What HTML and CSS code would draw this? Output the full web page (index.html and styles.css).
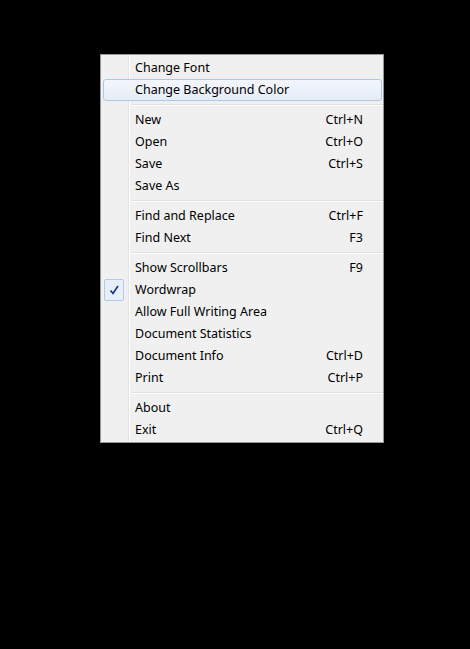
FILE: index.html
```html
<!DOCTYPE html>
<html>
<head>
<meta charset="utf-8">
<link rel="stylesheet" href="styles.css">
</head>
<body>
<div class="menu">
  <div class="item"><span class="label">Change Font</span></div>
  <div class="item hover"><span class="label">Change Background Color</span></div>
  <div class="sep"></div>
  <div class="item"><span class="label">New</span><span class="key">Ctrl+N</span></div>
  <div class="item"><span class="label">Open</span><span class="key">Ctrl+O</span></div>
  <div class="item"><span class="label">Save</span><span class="key">Ctrl+S</span></div>
  <div class="item"><span class="label">Save As</span></div>
  <div class="sep"></div>
  <div class="item"><span class="label">Find and Replace</span><span class="key">Ctrl+F</span></div>
  <div class="item"><span class="label">Find Next</span><span class="key">F3</span></div>
  <div class="sep"></div>
  <div class="item"><span class="label">Show Scrollbars</span><span class="key">F9</span></div>
  <div class="item checked">
    <span class="check"><svg width="12" height="12" viewBox="0 0 12 12"><path d="M2.5 6.5 L5 9.5 L10 2" fill="none" stroke="#14308a" stroke-width="1.6" stroke-linejoin="miter"/></svg></span>
    <span class="label">Wordwrap</span>
  </div>
  <div class="item"><span class="label">Allow Full Writing Area</span></div>
  <div class="item"><span class="label">Document Statistics</span></div>
  <div class="item"><span class="label">Document Info</span><span class="key">Ctrl+D</span></div>
  <div class="item"><span class="label">Print</span><span class="key">Ctrl+P</span></div>
  <div class="sep"></div>
  <div class="item"><span class="label">About</span></div>
  <div class="item"><span class="label">Exit</span><span class="key">Ctrl+Q</span></div>
</div>
</body>
</html>
```
FILE: styles.css
```css
html, body {
  margin: 0;
  padding: 0;
  background: #000;
}
body {
  width: 470px;
  height: 649px;
  padding: 54px 0 0 100px;
  box-sizing: border-box;
  font-family: "Noto Sans", "Open Sans", sans-serif;
  font-size: 12.5px;
  color: #000;
}
.menu {
  width: 284px;
  box-sizing: border-box;
  border: 1px solid #979797;
  padding: 2px 1px 1px 2px;
  background:
    linear-gradient(to right, transparent 27px, #e2e3e3 27px, #e2e3e3 28px, #ffffff 28px, #ffffff 29px, transparent 29px),
    #f0f0f0;
  background-origin: border-box;
  background-position: 1px 0;
}
.item {
  position: relative;
  height: 22px;
  display: flex;
  align-items: center;
  justify-content: space-between;
  padding: 0 19px 0 32px;
  box-sizing: border-box;
  line-height: 22px;
  white-space: nowrap;
}
.item.hover {
  border: 1px solid #aec7e4;
  border-radius: 3px;
  background: linear-gradient(#f3f7fc, #e6edf7);
  padding: 0 18px 0 31px;
}
.check {
  position: absolute;
  left: 1px;
  top: 0;
  width: 20px;
  height: 22px;
  box-sizing: border-box;
  border: 1px solid #aecbe8;
  border-radius: 2px;
  background: #e8eff8;
  display: flex;
  align-items: center;
  justify-content: center;
}
.check svg {
  display: block;
}
.sep {
  height: 8px;
  margin-left: 28px;
  margin-right: -1px;
  background: linear-gradient(#e0e0e0, #e0e0e0) 0 3px / 100% 1px no-repeat,
              linear-gradient(#ffffff, #ffffff) 0 4px / 100% 1px no-repeat;
}
```
